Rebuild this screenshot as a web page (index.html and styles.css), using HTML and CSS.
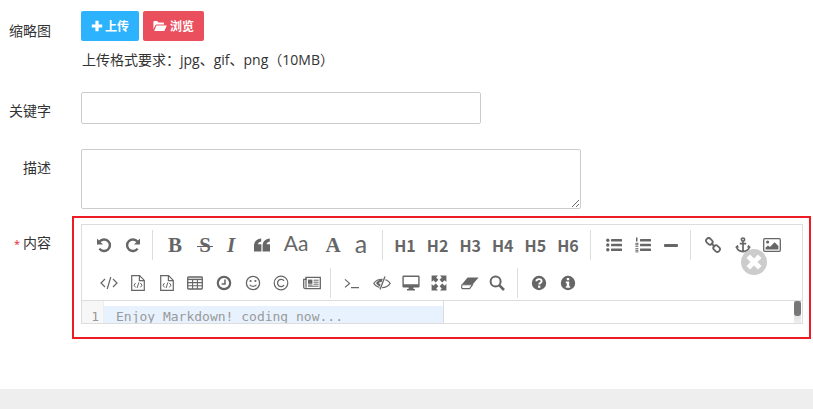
FILE: index.html
```html
<!DOCTYPE html>
<html lang="zh-CN">
  <head>
    <meta charset="UTF-8" />
    <title>内容编辑</title>
    <link rel="stylesheet" href="styles.css">
  </head>
  <body>
    <svg class="sprite" xmlns="http://www.w3.org/2000/svg">
      <symbol id="i-undo" viewBox="0 0 16 16"><path d="M3.6 4.6A5.8 5.8 0 1 1 3.4 11.6" fill="none" stroke="currentColor" stroke-width="2.4"/><path d="M1 1.4V7.4H7Z" fill="currentColor"/></symbol>
      <symbol id="i-redo" viewBox="0 0 16 16"><path d="M12.4 4.6A5.8 5.8 0 1 0 12.6 11.6" fill="none" stroke="currentColor" stroke-width="2.4"/><path d="M15 1.4V7.4H9Z" fill="currentColor"/></symbol>
      <symbol id="i-quote" viewBox="0 0 16 16"><path d="M0 14.4V8.6C0 4.8 2.6 2.2 7.2 1.6V4.4C5.2 4.8 4 5.8 4 7.2H7.4V14.4Z" fill="currentColor"/><path d="M8.6 14.4V8.6C8.6 4.8 11.2 2.2 15.8 1.6V4.4C13.8 4.8 12.6 5.8 12.6 7.2H16V14.4Z" fill="currentColor"/></symbol>
      <symbol id="i-ul" viewBox="0 0 16 16"><g fill="currentColor"><circle cx="1.8" cy="3.2" r="1.7"/><circle cx="1.8" cy="8" r="1.7"/><circle cx="1.8" cy="12.8" r="1.7"/><rect x="5" y="2" width="11" height="2.4" rx=".5"/><rect x="5" y="6.8" width="11" height="2.4" rx=".5"/><rect x="5" y="11.6" width="11" height="2.4" rx=".5"/></g></symbol>
      <symbol id="i-ol" viewBox="0 0 16 16"><g fill="currentColor"><rect x="5" y="2" width="11" height="2.4" rx=".5"/><rect x="5" y="6.8" width="11" height="2.4" rx=".5"/><rect x="5" y="11.6" width="11" height="2.4" rx=".5"/><rect x="1" y="0.5" width="1.5" height="4"/><rect x=".4" y="5.8" width="3" height="1"/><rect x=".4" y="7.2" width="3" height="1"/><rect x=".4" y="8.8" width="3" height="1"/><rect x=".4" y="11.2" width="3" height="1"/><rect x=".4" y="12.8" width="3" height="1"/><rect x=".4" y="14.4" width="3" height="1"/></g></symbol>
      <symbol id="i-link" viewBox="0 0 16 16"><g fill="none" stroke="currentColor" stroke-width="1.8"><rect x="-3.6" y="-2.6" width="7.2" height="5.2" rx="2.6" transform="translate(4.4 4.4) rotate(45)"/><rect x="-3.6" y="-2.6" width="7.2" height="5.2" rx="2.6" transform="translate(11.6 11.6) rotate(45)"/><path d="M6 6L10 10"/></g></symbol>
      <symbol id="i-anchor" viewBox="0 0 16 16"><g fill="none" stroke="currentColor" stroke-width="1.7"><circle cx="8" cy="2.6" r="1.6"/><path d="M8 4.2V14.6M4.8 6.6H11.2M1.6 9.6C2 12.6 5 14.4 8 14.6C11 14.4 14 12.6 14.4 9.6"/></g><path d="M0 10.4L2.6 7.8L4 10.6ZM16 10.4L13.4 7.8L12 10.6Z" fill="currentColor"/></symbol>
      <symbol id="i-image" viewBox="0 0 18 16"><rect x=".7" y="1.7" width="16.6" height="12.6" rx="1" fill="none" stroke="currentColor" stroke-width="1.3"/><circle cx="4.6" cy="5" r="1.6" fill="currentColor"/><path d="M2.6 12.6V10.6L5 8.4L7 10L11.6 5.2L15.4 9V12.6Z" fill="currentColor"/></symbol>
      <symbol id="i-code" viewBox="0 0 18 16"><path d="M5 4L1 8L5 12M13 4L17 8L13 12M10.8 2L7.2 14" fill="none" stroke="currentColor" stroke-width="1.2"/></symbol>
      <symbol id="i-file" viewBox="0 0 14 16"><path d="M.7.7H8.6L13.3 5.4V15.3H.7Z" fill="none" stroke="currentColor" stroke-width="1.2"/><path d="M8.4.7V5.6H13.3" fill="none" stroke="currentColor" stroke-width="1.2"/><path d="M4.6 8L3 10.2L4.6 12.4M9.4 8L11 10.2L9.4 12.4M7.9 7.4L6.1 13" fill="none" stroke="currentColor" stroke-width="1"/></symbol>
      <symbol id="i-table" viewBox="0 0 16 16"><rect x=".7" y="2" width="14.6" height="12" rx=".8" fill="none" stroke="currentColor" stroke-width="1.3"/><path d="M1 4.4H15" stroke="currentColor" stroke-width="1.4"/><path d="M1 7.6H15M1 10.8H15M5.6 4V14M10.4 4V14" stroke="currentColor" stroke-width="1.1"/></symbol>
      <symbol id="i-clock" viewBox="0 0 16 16"><circle cx="8" cy="8" r="6.2" fill="none" stroke="currentColor" stroke-width="2.2"/><path d="M9 4.4V9H5.6" fill="none" stroke="currentColor" stroke-width="1.5"/></symbol>
      <symbol id="i-smile" viewBox="0 0 16 16"><circle cx="8" cy="8" r="6.6" fill="none" stroke="currentColor" stroke-width="1.3"/><circle cx="5.6" cy="6" r="1.1" fill="currentColor"/><circle cx="10.4" cy="6" r="1.1" fill="currentColor"/><path d="M4.6 9.8C5.8 11.8 10.2 11.8 11.4 9.8" fill="none" stroke="currentColor" stroke-width="1.2"/></symbol>
      <symbol id="i-copy" viewBox="0 0 16 16"><circle cx="8" cy="8" r="6.8" fill="none" stroke="currentColor" stroke-width="1.2"/><path d="M11 5.8A3.6 3.6 0 1 0 11 10.2" fill="none" stroke="currentColor" stroke-width="1.3"/></symbol>
      <symbol id="i-news" viewBox="0 0 18 16"><path d="M3 2.4H17.3V13.6H2.4C1.2 13.6.7 12.8.7 12V4.4H3Z" fill="none" stroke="currentColor" stroke-width="1.3"/><path d="M3 3V12.8" stroke="currentColor" stroke-width="1.2"/><path d="M5 4.6H9.4V8.8H5Z" fill="currentColor"/><path d="M10.6 5.2H15.6M10.6 7.2H15.6M10.6 9.2H15.6M5 11.2H15.6M5 10H9.4" stroke="currentColor" stroke-width="1"/></symbol>
      <symbol id="i-term" viewBox="0 0 16 16"><path d="M1 4.4L5.6 8.4L1 12.4M7 12.6H15" fill="none" stroke="currentColor" stroke-width="1.2"/></symbol>
      <symbol id="i-eye" viewBox="0 0 18 16"><path d="M.8 8.4C4.4 2.8 13.6 2.8 17.2 8.4C13.6 14 4.4 14 .8 8.4Z" fill="none" stroke="currentColor" stroke-width="1.1"/><path d="M3 8C5 5 7.6 3.8 10 4.2L7.2 11.6C5.4 11.2 4 9.6 3 8Z" fill="currentColor"/><path d="M8.6 7L7.6 9.6C6.6 9.4 6 8.4 6.2 7.6C6.6 7 7.6 6.8 8.6 7Z" fill="#fff"/><path d="M12.2 1.4L7 14.6" fill="none" stroke="#fff" stroke-width="2.6"/><path d="M12 1.6L7 14.4" fill="none" stroke="currentColor" stroke-width="1.3"/></symbol>
      <symbol id="i-desktop" viewBox="0 0 18 16"><path d="M1.6.6H16.4Q17.6.6 17.6 1.8V11.2Q17.6 12.4 16.4 12.4H11.4V14H13V15.4H5V14H6.6V12.4H1.6Q.4 12.4.4 11.2V1.8Q.4.6 1.6.6ZM1.8 2V9.2H16.2V2Z" fill="currentColor" fill-rule="evenodd"/></symbol>
      <symbol id="i-expand" viewBox="0 0 16 16"><path d="M.6.6H7L5.2 2.4L7.4 4.8L4.8 7.4L2.4 5.2L.6 7ZM15.4.6V7L13.6 5.2L11.2 7.4L8.6 4.8L10.8 2.4L9 .6ZM.6 15.4V9L2.4 10.8L4.8 8.6L7.4 11.2L5.2 13.6L7 15.4ZM15.4 15.4H9L10.8 13.6L8.6 11.2L11.2 8.6L13.6 10.8L15.4 9Z" fill="currentColor"/></symbol>
      <symbol id="i-eraser" viewBox="0 0 18 16"><path d="M6.6 2.4H17.6L11.6 9.6H.8Z" fill="currentColor"/><path d="M.9 9.7H11.5L8.6 13.6H1.2L.6 12.6Z" fill="none" stroke="currentColor" stroke-width="1.1"/></symbol>
      <symbol id="i-search" viewBox="0 0 16 16"><circle cx="6.6" cy="6.6" r="5" fill="none" stroke="currentColor" stroke-width="2"/><path d="M10.4 10.4L15 15" stroke="currentColor" stroke-width="2.6"/></symbol>
      <symbol id="i-help" viewBox="0 0 16 16"><circle cx="8" cy="8" r="7.2" fill="currentColor"/><path d="M5.4 6.2C5.6 3.4 10.6 3.4 10.6 6.2C10.6 8 8.2 7.8 8.2 9.6" fill="none" stroke="#fff" stroke-width="1.9"/><rect x="7.1" y="10.6" width="2.2" height="2.2" fill="#fff"/></symbol>
      <symbol id="i-info" viewBox="0 0 16 16"><circle cx="8" cy="8" r="7.2" fill="currentColor"/><path d="M6.8 3H9.2V5.2H6.8ZM5.8 6.6H9.2V11.2H10.2V12.8H5.8V11.2H6.8V8.2H5.8Z" fill="#fff"/></symbol>
      <symbol id="i-plus" viewBox="0 0 12 12"><path d="M4.4.8H7.6V4.4H11.2V7.6H7.6V11.2H4.4V7.6H.8V4.4H4.4Z" fill="currentColor"/></symbol>
      <symbol id="i-folder" viewBox="0 0 14 12"><path d="M.4 9.2V2Q.4 1 1.4 1H4.2L5.4 2.4H10Q11 2.4 11 3.4V4.4H3.6Q2.8 4.4 2.4 5.2Z" fill="currentColor"/><path d="M1.2 11L3.4 5.6H13.8L11.4 11Z" fill="currentColor"/></symbol>
    </svg>

    <form class="form">
      <div class="row row-thumb">
        <label class="label">缩略图</label>
        <div class="field">
          <div class="btns">
            <button type="button" class="btn btn-blue"><svg class="btn-plus"><use href="#i-plus"/></svg>上传</button>
            <button type="button" class="btn btn-red"><svg class="btn-folder"><use href="#i-folder"/></svg>浏览</button>
          </div>
          <p class="hint">上传格式要求：jpg、gif、png（10MB）</p>
        </div>
      </div>

      <div class="row row-keyword">
        <label class="label">关键字</label>
        <div class="field"><input class="input" type="text" /></div>
      </div>

      <div class="row row-desc">
        <label class="label">描述</label>
        <div class="field"><textarea class="textarea"></textarea></div>
      </div>

      <div class="row row-content">
        <label class="label"><span class="star">*</span>内容</label>
        <div class="box">
          <div class="editor">
            <div class="toolbar">
              <div class="tools tools-1">
                <a class="tool"><svg class="ic"><use href="#i-undo"/></svg></a>
                <a class="tool m5"><svg class="ic"><use href="#i-redo"/></svg></a>
                <i class="sep s-a"></i>
                <a class="tool glyph serif">B</a>
                <a class="tool glyph serif strike m6">S</a>
                <a class="tool glyph serif ital m2">I</a>
                <a class="tool m7"><svg class="ic"><use href="#i-quote"/></svg></a>
                <a class="tool glyph thin m10">Aa</a>
                <a class="tool glyph serif m13">A</a>
                <a class="tool glyph thin thin-a m4">a</a>
                <i class="sep s-b"></i>
                <div class="heads">
                  <a class="tool head">H1</a>
                  <a class="tool head">H2</a>
                  <a class="tool head">H3</a>
                  <a class="tool head">H4</a>
                  <a class="tool head">H5</a>
                  <a class="tool head">H6</a>
                </div>
                <i class="sep s-c"></i>
                <a class="tool"><svg class="ic"><use href="#i-ul"/></svg></a>
                <a class="tool m5"><svg class="ic"><use href="#i-ol"/></svg></a>
                <a class="tool m4"><span class="hr"></span></a>
                <i class="sep s-d"></i>
                <a class="tool"><svg class="ic"><use href="#i-link"/></svg></a>
                <a class="tool m6"><svg class="ic ic-anchor"><use href="#i-anchor"/></svg></a>
                <a class="tool m5"><svg class="ic ic-wide"><use href="#i-image"/></svg></a>
              </div>
              <div class="tools tools-2">
                <a class="tool"><svg class="ic ic-wide"><use href="#i-code"/></svg></a>
                <a class="tool m5"><svg class="ic ic-file"><use href="#i-file"/></svg></a>
                <a class="tool m5"><svg class="ic ic-file"><use href="#i-file"/></svg></a>
                <a class="tool m4"><svg class="ic"><use href="#i-table"/></svg></a>
                <a class="tool m5"><svg class="ic"><use href="#i-clock"/></svg></a>
                <a class="tool m5"><svg class="ic"><use href="#i-smile"/></svg></a>
                <a class="tool m4"><svg class="ic"><use href="#i-copy"/></svg></a>
                <a class="tool m7"><svg class="ic ic-wide"><use href="#i-news"/></svg></a>
                <i class="sep s-e"></i>
                <a class="tool"><svg class="ic"><use href="#i-term"/></svg></a>
                <a class="tool m6"><svg class="ic ic-wide"><use href="#i-eye"/></svg></a>
                <a class="tool m5"><svg class="ic ic-wide"><use href="#i-desktop"/></svg></a>
                <a class="tool m4"><svg class="ic"><use href="#i-expand"/></svg></a>
                <a class="tool m7"><svg class="ic ic-wide"><use href="#i-eraser"/></svg></a>
                <a class="tool m3"><svg class="ic"><use href="#i-search"/></svg></a>
                <i class="sep s-f"></i>
                <a class="tool"><svg class="ic"><use href="#i-help"/></svg></a>
                <a class="tool m5"><svg class="ic"><use href="#i-info"/></svg></a>
              </div>
            </div>
            <div class="code">
              <div class="gutter">1</div>
              <div class="sizer"><div class="line">Enjoy Markdown! coding now...</div></div>
              <div class="scrollbar"><span class="thumb"></span></div>
            </div>
            <span class="close"><svg viewBox="0 0 26 26"><path d="M5.5 9L9 5.5L13 9.5L17 5.5L20.5 9L16.5 13L20.5 17L17 20.5L13 16.5L9 20.5L5.5 17L9.5 13Z" fill="#fff"/></svg></span>
          </div>
        </div>
      </div>
    </form>
    <div class="footer"></div>
  </body>
</html>
```

FILE: styles.css
```css
* {
  box-sizing: border-box;
}
body {
  margin: 0;
  height: 409px;
  overflow: hidden;
  background-color: #fff;
  color: #333;
  font-family: "Open Sans", "Noto Sans CJK SC", sans-serif;
  font-size: 14px;
  line-height: 20px;
}
.sprite {
  display: none;
}
.row {
  display: flex;
  align-items: flex-start;
}
.label {
  width: 51px;
  flex: none;
  text-align: right;
}
.field {
  margin-left: 30px;
}
.row-thumb {
  padding-top: 11px;
}
.row-thumb .label {
  padding-top: 10px;
}
.row-keyword {
  margin-top: 22px;
}
.row-keyword .label,
.row-desc .label {
  padding-top: 9px;
}
.row-desc {
  margin-top: 25px;
}
.row-content {
  margin-top: 7px;
}
.row-content .label {
  padding-top: 17px;
}
.star {
  margin-right: 3px;
  color: #e4232c;
  font-size: 11px;
}

/* upload buttons */
.btns {
  display: flex;
  gap: 4px;
}
.btn {
  display: flex;
  align-items: center;
  justify-content: center;
  height: 30px;
  border: none;
  border-radius: 2px;
  color: #fff;
  font-family: inherit;
  font-size: 12px;
  font-weight: bold;
  padding: 0;
}
.btn-blue {
  width: 58px;
  background-color: #2db3fd;
}
.btn-red {
  width: 61px;
  background-color: #ea4f5d;
}
.btn-plus {
  width: 12px;
  height: 12px;
  margin-right: 2px;
}
.btn-folder {
  width: 14px;
  height: 12px;
  margin-right: 3px;
}
.hint {
  margin: 9px 0 0 1px;
}

/* inputs */
.input {
  display: block;
  width: 400px;
  height: 32px;
  border: 1px solid #ccc;
  border-radius: 2px;
  outline: none;
}
.textarea {
  display: block;
  width: 500px;
  height: 60px;
  border: 1px solid #ccc;
  border-radius: 2px;
  outline: none;
}

/* editor */
.box {
  width: 739px;
  height: 123px;
  margin-left: 21px;
  padding: 6px 6px 0 7px;
  border: 2px solid #ed1c24;
}
.editor {
  position: relative;
  height: 100px;
  border: 1px solid #ddd;
}
.toolbar {
  height: 76px;
  padding-top: 5px;
  border-bottom: 1px solid #ddd;
  color: #666;
}
.tools {
  display: flex;
  height: 30px;
}
.tools-1 {
  padding-left: 10px;
}
.tools-2 {
  margin-top: 8px;
  padding-left: 15px;
}
.tool {
  position: relative;
  display: flex;
  align-items: center;
  justify-content: center;
  width: 24px;
  height: 30px;
  flex: none;
}
.m2 { margin-left: 2px; }
.m3 { margin-left: 3px; }
.m4 { margin-left: 4px; }
.m5 { margin-left: 5px; }
.m6 { margin-left: 6px; }
.m7 { margin-left: 7px; }
.m10 { margin-left: 10px; }
.m13 { margin-left: 13px; }
.sep {
  width: 1px;
  height: 30px;
  flex: none;
  background-color: #ddd;
}
.s-a { margin: 0 10px 0 7px; }
.s-b { margin: 0 10px 0 9px; }
.s-c { margin: 0 11px 0 10px; }
.s-d { margin: 0 10px 0 7px; }
.s-e { margin: 0 9px 0 6px; }
.s-f { margin: 0 9px 0 8px; }
.ic {
  width: 16px;
  height: 16px;
}
.ic-wide {
  width: 18px;
}
.ic-file {
  width: 14px;
}
.glyph {
  font-size: 21px;
}
.serif {
  font-family: "Liberation Serif", serif;
  font-weight: bold;
}
.ital {
  font-style: italic;
}
.strike::after {
  content: "";
  position: absolute;
  left: 4px;
  top: 16px;
  width: 16px;
  height: 1px;
  background-color: #666;
}
.thin {
  padding-bottom: 5px;
  font-family: "Lato", sans-serif;
  font-weight: normal;
}
.thin-a {
  font-size: 25px;
}
.heads {
  display: flex;
  gap: 8.6px;
}
.head {
  font-family: "Noto Sans CJK SC", sans-serif;
  font-size: 16px;
  font-weight: bold;
}
.hr {
  width: 14px;
  height: 3px;
  border-radius: 1px;
  background-color: #666;
}
.code {
  display: flex;
  height: 22px;
  overflow: hidden;
  font-family: "DejaVu Sans Mono", monospace;
  font-size: 13px;
  line-height: 21px;
}
.gutter {
  width: 22px;
  padding: 5px 4px 0 0;
  text-align: right;
  color: #999;
  background-color: #f7f7f7;
  border-right: 1px solid #eee;
}
.sizer {
  width: 340px;
  padding-top: 5px;
  border-right: 1px solid #ddd;
}
.line {
  height: 17px;
  padding-left: 12px;
  color: #999;
  background-color: #e8f2fe;
  white-space: nowrap;
}
.scrollbar {
  display: flex;
  width: 7px;
  margin: 0 1px 0 auto;
  background: linear-gradient(#ccc, #eee);
}
.thumb {
  width: 7px;
  height: 15px;
  border-radius: 3px;
  background-color: #777;
}
.close {
  position: absolute;
  top: 24px;
  left: 659px;
  width: 26px;
  height: 26px;
  border-radius: 50%;
  background-color: #ccc;
}
.close svg {
  display: block;
  width: 26px;
  height: 26px;
}
.footer {
  height: 20px;
  margin-top: 50px;
  background-color: #eeeeef;
}
```
